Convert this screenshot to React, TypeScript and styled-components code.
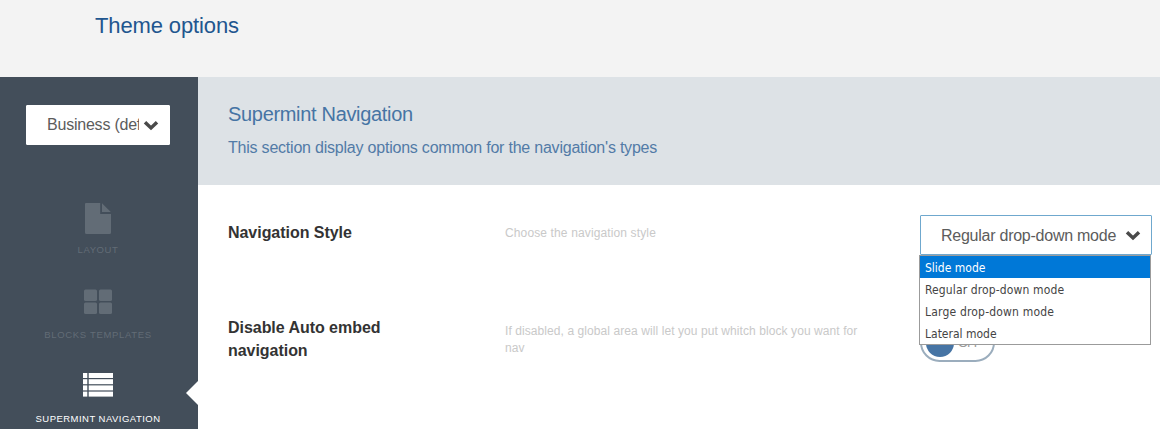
import React from 'react';
import styled, { createGlobalStyle } from 'styled-components';

const GlobalStyle = createGlobalStyle`
  * { box-sizing: border-box; }
  body {
    margin: 0;
    background: #fff;
    font-family: 'Liberation Sans', Arial, sans-serif;
    overflow: hidden;
  }
  h1, h2, h3, p, ul { margin: 0; padding: 0; font-weight: 400; }
`;

const Page = styled.div`
  display: flex;
  flex-direction: column;
  width: 1160px;
  height: 429px;
  overflow: hidden;
`;

const TopBar = styled.header`
  flex: none;
  height: 77px;
  padding: 13px 0 0 95px;
  background: #f3f3f3;
`;

const PageTitle = styled.h1`
  font-size: 22px;
  line-height: 26px;
  letter-spacing: -0.12px;
  color: #1f568f;
`;

const Body = styled.div`
  display: flex;
  flex: 1;
  min-height: 0;
`;

const Sidebar = styled.nav`
  display: flex;
  flex-direction: column;
  flex: none;
  width: 198px;
  padding-top: 28px;
  background: #434e5a;
`;

const Select = styled.div<{ $width: number; $focused?: boolean }>`
  display: flex;
  align-items: center;
  flex: none;
  width: ${(p) => p.$width}px;
  height: 40px;
  padding: 0 10px 0 20px;
  border: 1px solid ${(p) => (p.$focused ? '#6fa8ce' : '#fff')};
  border-radius: 1px;
  background: #fff;
  color: #5c5c5c;
`;

const SelectText = styled.span<{ $width: number; $spacing: number; $drop?: number }>`
  width: ${(p) => p.$width}px;
  padding-top: ${(p) => p.$drop ?? 0}px;
  overflow: hidden;
  white-space: nowrap;
  font-size: 16px;
  line-height: 20px;
  letter-spacing: ${(p) => p.$spacing}px;
`;

const ThemeSelect = styled(Select)`
  margin: 0 0 58px 26px;
`;

const ChevronIcon = styled.svg`
  flex: none;
  display: block;
  margin-left: auto;
`;

const NavItem = styled.a<{ $active?: boolean }>`
  position: relative;
  display: flex;
  flex-direction: column;
  align-items: center;
  flex: none;
  width: 196px;
  height: 84.5px;
  color: ${(p) => (p.$active ? '#fff' : '#626c76')};
`;

const NavIcon = styled.svg`
  display: block;
  width: 32px;
  height: 31px;
`;

const NavLabel = styled.span<{ $spacing: number }>`
  margin-top: 10px;
  font-size: 9.5px;
  line-height: 12px;
  letter-spacing: ${(p) => p.$spacing}px;
  white-space: nowrap;
`;

const ActivePointer = styled.span`
  position: absolute;
  right: -2px;
  top: 9px;
  border: 12px solid transparent;
  border-left-width: 0;
  border-right-color: #fff;
`;

const Main = styled.main`
  flex: 1;
  display: flex;
  flex-direction: column;
`;

const SectionHeader = styled.section`
  height: 108px;
  padding: 25px 30px 0;
  background: #dde2e6;
  color: #4674a4;
`;

const SectionTitle = styled.h2`
  font-size: 20px;
  line-height: 24px;
  letter-spacing: -0.32px;
`;

const SectionText = styled.p`
  margin-top: 12px;
  font-size: 16px;
  line-height: 20px;
  letter-spacing: -0.215px;
  color: #527ba7;
`;

const OptionRow = styled.section<{ $height: number }>`
  display: grid;
  grid-template-columns: 277px 415px 232px;
  align-items: start;
  height: ${(p) => p.$height}px;
  padding: 30px 0 0 30px;
`;

const OptionName = styled.h3`
  width: 170px;
  padding-top: 6px;
  font-size: 16px;
  font-weight: 700;
  line-height: 23px;
  letter-spacing: -0.04px;
  color: #333;
`;

const OptionHelp = styled.p<{ $spacing: number; $drop: number }>`
  width: 360px;
  padding-top: ${(p) => p.$drop}px;
  font-size: 12px;
  line-height: 17px;
  letter-spacing: ${(p) => p.$spacing}px;
  color: #c9c9c9;
`;

const DropDown = styled.div`
  position: relative;
`;

const Menu = styled.ul`
  position: absolute;
  z-index: 2;
  top: 40px;
  left: -1px;
  width: 232px;
  height: 90px;
  border: 1px solid #9b9b9b;
  background: #fff;
  list-style: none;
`;

const MenuItem = styled.li<{ $selected?: boolean; $spacing: number }>`
  height: 22px;
  padding: 1px 0 0 5px;
  font-family: 'DejaVu Sans Condensed', 'DejaVu Sans', sans-serif;
  font-stretch: condensed;
  font-size: 12px;
  line-height: 23px;
  letter-spacing: ${(p) => p.$spacing}px;
  white-space: nowrap;
  color: ${(p) => (p.$selected ? '#fff' : '#444')};
  background: ${(p) => (p.$selected ? '#0078d7' : 'transparent')};
`;

const Toggle = styled.div`
  display: flex;
  align-items: center;
  width: 75px;
  height: 39px;
  margin-top: 13px;
  padding-left: 4px;
  border: 2px solid #9badbd;
  border-radius: 20px;
  background: #fff;
`;

const ToggleKnob = styled.span`
  width: 28px;
  height: 28px;
  border-radius: 50%;
  background: #4674a4;
`;

const ToggleText = styled.span`
  margin-left: 4px;
  font-size: 13px;
  line-height: 15px;
  letter-spacing: -1.2px;
  color: #999;
`;

const Chevron = () => (
  <ChevronIcon width="16" height="11" viewBox="0 0 16 11">
    <path d="M2 2.200L8 7.900l6-5.700" fill="none" stroke="#4a4a4a" strokeWidth="3.500" />
  </ChevronIcon>
);

const FileIcon = () => (
  <NavIcon viewBox="0 0 32 31" fill="currentColor">
    <path d="M4 0H18.2V11H29V29.5Q29 31 27.5 31H4.500Q3 31 3 29.500V1Q3 0 4 0Z" />
    <path d="M20 0.300L28.800 9H20Z" />
  </NavIcon>
);

const BlocksIcon = () => (
  <NavIcon viewBox="0 0 32 31" fill="currentColor">
    <rect x="2" y="1.500" width="13" height="11.500" rx="1.500" />
    <rect x="17" y="1.500" width="13" height="11.500" rx="1.500" />
    <rect x="2" y="14.500" width="13" height="11.500" rx="1.500" />
    <rect x="17" y="14.500" width="13" height="11.500" rx="1.500" />
  </NavIcon>
);

const ListIcon = () => (
  <NavIcon viewBox="0 0 32 31" fill="currentColor">
    {[1, 7.2, 13.4, 19.6].map((y) => (
      <g key={y}>
        <rect x="1" y={y} width="4.300" height="5" />
        <rect x="6.700" y={y} width="24.300" height="5" />
      </g>
    ))}
  </NavIcon>
);

const modes = [
  { label: 'Slide mode', spacing: 0, selected: true },
  { label: 'Regular drop-down mode', spacing: 0.13 },
  { label: 'Large drop-down mode', spacing: 0.19 },
  { label: 'Lateral mode', spacing: 0 },
];

export default function App() {
  return (
    <>
      <GlobalStyle />
      <Page>
        <TopBar>
          <PageTitle>Theme options</PageTitle>
        </TopBar>
        <Body>
          <Sidebar>
            <ThemeSelect $width={144}>
              <SelectText $width={92} $spacing={-0.22}>Business (default)</SelectText>
              <Chevron />
            </ThemeSelect>
            <NavItem>
              <FileIcon />
              <NavLabel $spacing={0.6}>LAYOUT</NavLabel>
            </NavItem>
            <NavItem>
              <BlocksIcon />
              <NavLabel $spacing={0.68}>BLOCKS TEMPLATES</NavLabel>
            </NavItem>
            <NavItem $active>
              <ListIcon />
              <NavLabel $spacing={0.47}>SUPERMINT NAVIGATION</NavLabel>
              <ActivePointer />
            </NavItem>
          </Sidebar>
          <Main>
            <SectionHeader>
              <SectionTitle>Supermint Navigation</SectionTitle>
              <SectionText>This section display options common for the navigation's types</SectionText>
            </SectionHeader>
            <OptionRow $height={95}>
              <OptionName>Navigation Style</OptionName>
              <OptionHelp $spacing={0.13} $drop={10}>Choose the navigation style</OptionHelp>
              <DropDown>
                <Select $width={232} $focused>
                  <SelectText $width={180} $spacing={-0.25} $drop={2}>Regular drop-down mode</SelectText>
                  <Chevron />
                </Select>
                <Menu>
                  {modes.map((m) => (
                    <MenuItem key={m.label} $selected={m.selected} $spacing={m.spacing}>
                      {m.label}
                    </MenuItem>
                  ))}
                </Menu>
              </DropDown>
            </OptionRow>
            <OptionRow $height={120}>
              <OptionName>Disable Auto embed navigation</OptionName>
              <OptionHelp $spacing={0.08} $drop={13}>
                If disabled, a global area will let you put whitch block you want for nav
              </OptionHelp>
              <Toggle>
                <ToggleKnob />
                <ToggleText>OFF</ToggleText>
              </Toggle>
            </OptionRow>
          </Main>
        </Body>
      </Page>
    </>
  );
}
